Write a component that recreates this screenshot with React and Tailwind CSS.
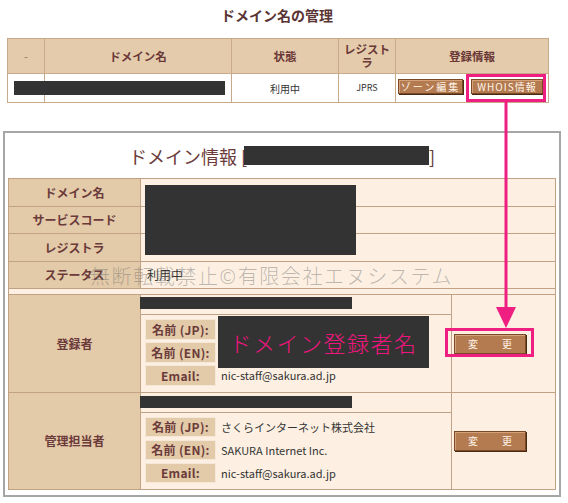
import React from "react";

const BORDER = "border-[#c2a284]";

function Btn({ children, className = "" }) {
  return (
    <div
      className={`flex items-center justify-center bg-[#b47b51] border border-[#7a4a28] shadow-[1px_1px_0_#4a2a10,inset_1px_1px_0_#d6a27a] text-[#fff4e8] text-[10px] leading-none ${className}`}
    >
      {children}
    </div>
  );
}

function Label({ children }) {
  return (
    <div
      className={`w-[132px] shrink-0 bg-[#e3caa9] border-r ${BORDER} flex items-center justify-center text-[12px] font-bold text-[#6b3a3a]`}
    >
      {children}
    </div>
  );
}

function SubRow({ label, value, h }) {
  return (
    <div className={`flex items-center ${h}`}>
      <div className="w-[71px] h-full shrink-0 bg-[#e3caa9] border border-[#f6e8d8] flex items-center justify-center text-[12px] font-bold text-[#6b3a3a] tracking-[0.3px]">
        {label}
      </div>
      <div className="ml-[5px] text-[11px] text-[#333]">{value}</div>
    </div>
  );
}

function Contact({ label, first, jp, en, barTop, rowH, gap, overlay }) {
  return (
    <div className={`flex ${first ? "h-[98px] border-b" : "h-[96px]"} ${BORDER}`}>
      <Label>{label}</Label>
      <div className={`w-[311px] shrink-0 border-r ${BORDER} relative flex flex-col`}>
        <div className={`h-[20px] shrink-0 border-b ${BORDER} relative`}>
          <div className={`absolute left-[-1px] ${barTop} w-[212px] h-[12px] bg-[#333]`} />
        </div>
        <div className={`pt-[4px] pl-[4px] flex flex-col ${gap}`}>
          <SubRow label="名前 (JP):" value={jp} h={rowH} />
          <SubRow label="名前 (EN):" value={en} h={rowH} />
          <SubRow label="Email:" value="nic-staff@sakura.ad.jp" h={rowH} />
        </div>
        {overlay && (
          <div className="absolute left-[77px] top-[21px] w-[211px] h-[52px] bg-[#333] flex items-center justify-center text-[22px] font-light text-[#f0147e] tracking-[1.5px] leading-none">
            ドメイン登録者名
          </div>
        )}
      </div>
      <div className="flex-1 flex items-center pl-[2px]">
        <Btn className="w-[72px] h-[20px] gap-[24px]">
          <span>変</span>
          <span>更</span>
        </Btn>
      </div>
    </div>
  );
}

export default function App() {
  const th = "border border-[#c8a98a] bg-[#e4cbab] text-[11.5px] font-bold text-[#6b3838] leading-[13px] p-0";
  const td = "border border-[#c8a98a] bg-white p-0 text-center";
  return (
    <div className="relative w-[568px] h-[503px] bg-white overflow-hidden font-['Noto_Sans_CJK_JP','Liberation_Sans',sans-serif]">
      <div className="h-[38px] flex justify-center items-start pt-[7px]">
        <span className="text-[14px] font-bold text-[#5a3434] leading-[16px] ml-[-14px]">ドメイン名の管理</span>
      </div>

      <table className="ml-[7px] w-[541px] table-fixed border-collapse">
        <colgroup>
          <col className="w-[37px]" />
          <col className="w-[187px]" />
          <col className="w-[107px]" />
          <col className="w-[57px]" />
          <col className="w-[153px]" />
        </colgroup>
        <thead>
          <tr className="h-[35px]">
            <th className={`${th} text-[#9a7a6a] font-normal`}>-</th>
            <th className={th}>ドメイン名</th>
            <th className={th}>状態</th>
            <th className={th}>
              レジスト
              <br />ラ
            </th>
            <th className={th}>登録情報</th>
          </tr>
        </thead>
        <tbody>
          <tr className="h-[29px]">
            <td className={`${td} relative`}>
              <div className="absolute left-[6px] top-[7px] w-[211px] h-[14px] bg-[#333]" />
            </td>
            <td className={td}></td>
            <td className={`${td} text-[10px] text-[#333]`}>利用中</td>
            <td className={`${td} text-[9px] text-[#333]`}>JPRS</td>
            <td className={`${td} align-top`}>
              <div className="flex gap-[8px] pl-[2px] pt-[5px]">
                <Btn className="w-[65px] h-[15px] tracking-[2px]">ゾーン編集</Btn>
                <Btn className="w-[72px] h-[15px] tracking-[1px]">WHOIS情報</Btn>
              </div>
            </td>
          </tr>
        </tbody>
      </table>

      <div className="mt-[28px] ml-[3px] w-[558px] h-[366px] border-2 border-[#a6a6a6] bg-white flex flex-col">
        <div className="h-[45px] shrink-0 flex items-center justify-center text-[18px] text-[#6b3a3a] leading-none">
          <span>ドメイン情報 [</span>
          <span className="inline-block w-[185px] h-[19px] bg-[#333] ml-[-3px]" />
          <span>]</span>
        </div>

        <div className={`mx-[3px] border ${BORDER} bg-[#fdf0e2] flex flex-col`}>
          <div className={`flex h-[28px] border-b ${BORDER}`}>
            <Label>ドメイン名</Label>
            <div className="flex-1 relative">
              <div className="absolute left-[4px] top-[6px] w-[211px] h-[70px] bg-[#333] z-10" />
            </div>
          </div>
          <div className={`flex h-[27px] border-b ${BORDER}`}>
            <Label>サービスコード</Label>
            <div className="flex-1" />
          </div>
          <div className={`flex h-[28px] border-b ${BORDER}`}>
            <Label>レジストラ</Label>
            <div className="flex-1" />
          </div>
          <div className={`flex h-[27px] border-b ${BORDER}`}>
            <Label>ステータス</Label>
            <div className="flex-1 flex items-center pl-[6px] text-[12px] text-[#333]">利用中</div>
          </div>
          <div className={`h-[6px] border-b ${BORDER}`} />
          <Contact
            label="登録者"
            first
            jp=""
            en=""
            barTop="top-[2px]"
            rowH="h-[21px]"
            gap="gap-[2px]"
            overlay
          />
          <Contact
            label="管理担当者"
            jp="さくらインターネット株式会社"
            en="SAKURA Internet Inc."
            barTop="top-[3px]"
            rowH="h-[20px]"
            gap="gap-[3px]"
          />
        </div>
      </div>

      <div className="absolute left-[90px] top-[266px] text-[20px] font-light tracking-[1.6px] leading-none whitespace-nowrap text-[rgba(110,110,110,0.45)] pointer-events-none">
        無断転載禁止©有限会社エヌシステム
      </div>

      <svg className="absolute inset-0 pointer-events-none" width="568" height="503" viewBox="0 0 568 503">
        <rect x="467.5" y="75.5" width="77" height="25" fill="none" stroke="#ee1f80" strokeWidth="3" />
        <line x1="506" y1="102" x2="506" y2="310" stroke="#ee1f80" strokeWidth="3" />
        <polygon points="496,307 516,307 506,328" fill="#ee1f80" />
        <rect x="446.5" y="329.5" width="86" height="26" fill="none" stroke="#ee1f80" strokeWidth="3" />
      </svg>
    </div>
  );
}
